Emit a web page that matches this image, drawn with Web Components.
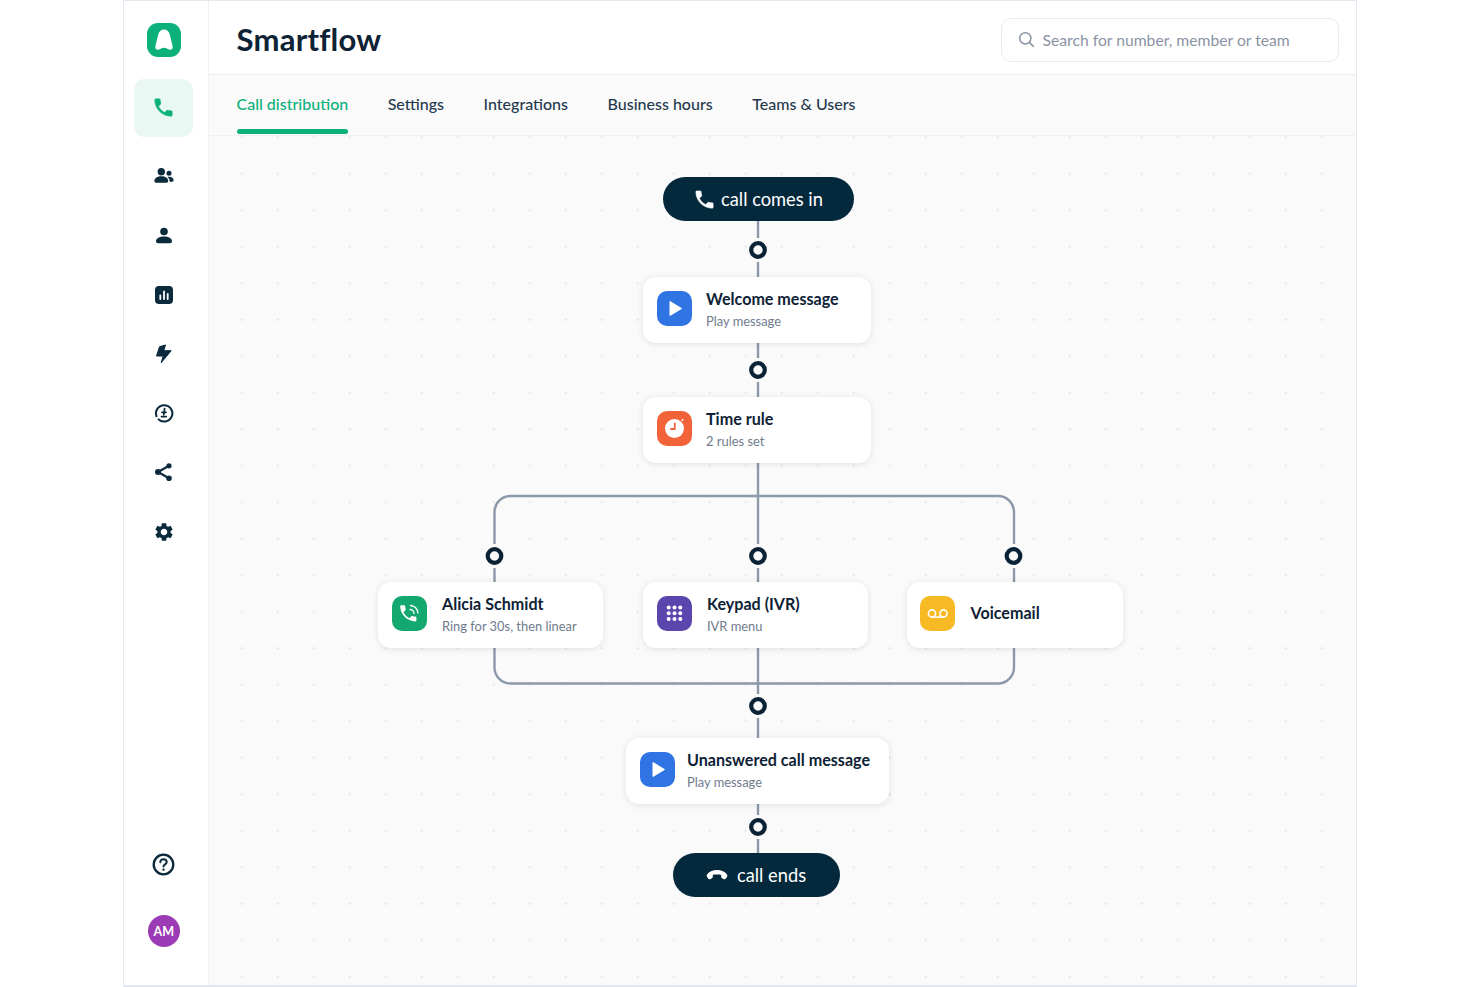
<!DOCTYPE html>
<html>
<head>
<meta charset="utf-8">
<title>Smartflow</title>
<style>
  html, body { margin: 0; height: 100%; background: #fff; }
  body { font-family: "Lato", "Liberation Sans", sans-serif; color: #0e2235; overflow: hidden; }
</style>
</head>
<body>

<template id="app-shell-tpl">
  <style>
    :host {
      display: grid;
      grid-template-columns: 84.5px 1fr;
      box-sizing: border-box;
      width: 1234px;
      height: 987px;
      margin-left: 123px;
      border: 1.5px solid #e4e7ef;
      border-top-width: 1px;
      border-bottom-width: 2px;
      background: #fff;
    }
    .main { display: flex; flex-direction: column; min-width: 0; background: #fafafb; }
  </style>
  <slot name="side"></slot>
  <div class="main">
    <slot name="head"></slot>
    <slot name="tabs"></slot>
    <slot></slot>
  </div>
</template>

<template id="side-nav-tpl">
  <style>
    :host {
      display: flex;
      flex-direction: column;
      align-items: center;
      box-sizing: border-box;
      padding: 22px 4px 38px 0;
      border-right: 1px solid #f0f1f4;
      background: #fff;
      color: #0b2a3c;
    }
    .logo { width: 34px; height: 34px; margin-bottom: 22px; }
    .nav { display: flex; flex-direction: column; align-items: center; }
    .bottom { margin-top: auto; display: flex; flex-direction: column; align-items: center; gap: 39px; }
  </style>
  <div class="logo"><slot name="logo"></slot></div>
  <div class="nav"><slot></slot></div>
  <div class="bottom"><slot name="bottom"></slot></div>
</template>

<template id="nav-item-tpl">
  <style>
    :host {
      display: flex;
      align-items: center;
      justify-content: center;
      width: 59px;
      height: 59.2px;
      border-radius: 10px;
    }
    :host([active]) { height: 57.5px; margin-bottom: 10.3px; background: #e9f8f2; color: #0bb07a; }
  </style>
  <slot></slot>
</template>

<template id="user-avatar-tpl">
  <style>
    :host {
      display: flex;
      align-items: center;
      justify-content: center;
      width: 32px;
      height: 32px;
      border-radius: 50%;
      background: #9b3bb5;
      color: #fff;
      font-size: 12.5px;
      font-weight: 700;
    }
  </style>
  <slot></slot>
</template>

<template id="page-header-tpl">
  <style>
    :host {
      display: flex;
      align-items: center;
      justify-content: space-between;
      box-sizing: border-box;
      height: 74px;
      padding: 4px 17.5px 0 28px;
      border-bottom: 1px solid #eceef2;
      background: #fff;
    }
    h1 { margin: -1px 0 0; font-size: 31px; font-weight: 700; letter-spacing: .25px; color: #0e2235; }
  </style>
  <h1><slot></slot></h1>
  <slot name="search"></slot>
</template>

<template id="search-box-tpl">
  <style>
    :host {
      display: flex;
      align-items: center;
      gap: 8px;
      box-sizing: border-box;
      width: 338px;
      height: 44px;
      padding: 0 16px;
      border: 1.5px solid #e9ebf0;
      border-radius: 10px;
      background: #fff;
      color: #8a93a3;
      font-size: 15.7px;
    }
    svg { display: block; flex: none; }
  </style>
  <svg width="17" height="17" viewBox="0 0 17 17" fill="none" stroke="#8a95a5" stroke-width="1.5" stroke-linecap="round">
    <circle cx="7.3" cy="7.3" r="5.6"/><path d="M11.6 11.6 15.4 15.4"/>
  </svg>
  <span><slot></slot></span>
</template>

<template id="tab-bar-tpl">
  <style>
    :host {
      display: flex;
      gap: 39.5px;
      box-sizing: border-box;
      height: 61px;
      padding-left: 28px;
      border-bottom: 1px solid #f0f1f4;
    }
  </style>
  <slot></slot>
</template>

<template id="tab-item-tpl">
  <style>
    :host {
      display: flex;
      flex-direction: column;
      justify-content: space-between;
      box-sizing: border-box;
      height: 59px;
      padding-top: 18px;
      font-size: 16px;
      font-weight: 500;
      line-height: 22px;
      color: #25394c;
    }
    .bar { height: 5px; border-radius: 3px; }
    :host([active]) { color: #0bb07a; }
    :host([active]) .bar { background: #0bb07a; }
  </style>
  <span><slot></slot></span>
  <div class="bar"></div>
</template>

<template id="flow-canvas-tpl">
  <style>
    :host {
      display: block;
      position: relative;
      flex: 1;
      background-image: radial-gradient(circle, #dcdfe5 .9px, transparent 1.2px);
      background-size: 36px 36.5px;
      background-position: 14.6px -17px;
    }
    svg { position: absolute; left: 0; top: 0; }
  </style>
  <svg width="1147" height="849" viewBox="209 136 1147 849" fill="none">
    <g stroke="#8c99aa" stroke-width="2.4">
      <path d="M758 221V238M758 262V277"/>
      <path d="M758 343V358M758 382V397"/>
      <path d="M758 463V544M758 568V582"/>
      <path d="M494.5 544V512a16 16 0 0 1 16-16H998a16 16 0 0 1 16 16V544"/>
      <path d="M494.5 568V582M1014 568V582"/>
      <path d="M494.5 647V667a16 16 0 0 0 16 16.5H998a16 16 0 0 0 16-16.5V647"/>
      <path d="M758 647V694M758 718V738"/>
      <path d="M758 804V815M758 839V853"/>
    </g>
    <g stroke="#0b2235" stroke-width="4.2" fill="#fafafb">
      <circle cx="758" cy="250" r="6.8"/>
      <circle cx="758" cy="370" r="6.8"/>
      <circle cx="494.5" cy="556" r="6.8"/>
      <circle cx="758" cy="556" r="6.8"/>
      <circle cx="1013.5" cy="556" r="6.8"/>
      <circle cx="758" cy="706" r="6.8"/>
      <circle cx="758" cy="827" r="6.8"/>
    </g>
  </svg>
  <slot></slot>
</template>

<template id="flow-node-tpl">
  <style>
    :host {
      display: flex;
      align-items: center;
      gap: var(--gap, 14px);
      position: absolute;
      box-sizing: border-box;
      height: 65.5px;
      padding: 0 0 2px var(--pad, 14.5px);
      border-radius: 13px;
      background: #fff;
      box-shadow: 0 1px 6px rgba(40, 55, 80, .13);
    }
    .icon { width: 35px; height: 35px; flex: none; }
    .text { display: flex; flex-direction: column; gap: 3px; margin-top: var(--text-top, 2px); }
    .title { font-size: 16.1px; line-height: 20px; font-weight: 700; color: #0e2235; }
    .sub { font-size: 12.9px; line-height: 18px; color: #6f7b8c; }
    .sub:empty { display: none; }
  </style>
  <div class="icon"><slot name="icon"></slot></div>
  <div class="text">
    <div class="title"><slot></slot></div>
    <div class="sub"></div>
  </div>
</template>

<template id="flow-pill-tpl">
  <style>
    :host {
      display: flex;
      align-items: center;
      justify-content: center;
      gap: var(--gap, 5px);
      position: absolute;
      box-sizing: border-box;
      height: 44px;
      border-radius: 22px;
      background: #04293c;
      color: #fff;
      font-size: 18.3px;
    }
  </style>
  <slot name="icon"></slot>
  <span><slot></slot></span>
</template>

<app-shell>
  <side-nav slot="side">
    <svg slot="logo" width="34" height="34" viewBox="0 0 34 34" style="display:block">
      <rect width="34" height="34" rx="11" fill="#0bb07a"/>
      <path d="M17 6.500c3 0 5 2 5.800 5l2.800 11.500c.6 2.600-1.400 4.500-3.600 3.500-1.800-.8-3.300-1.800-5-1.800s-3.200 1-5 1.800c-2.200 1-4.200-.9-3.600-3.500L11.200 11.500c.8-3 2.800-5 5.800-5z" fill="#fff"/>
    </svg>
    <nav-item active>
      <svg width="23" height="23" viewBox="0 0 24 24" fill="currentColor" stroke="currentColor" stroke-width=".8" stroke-linejoin="round"><path d="M6.620 10.790c1.440 2.830 3.760 5.140 6.590 6.590l2.200-2.200c.27-.27.67-.36 1.020-.24 1.120.37 2.330.57 3.570.57.55 0 1 .45 1 1V20c0 .55-.45 1-1 1-9.390 0-17-7.610-17-17 0-.55.45-1 1-1h3.500c.55 0 1 .45 1 1 0 1.250.2 2.450.57 3.570.11.35.03.74-.25 1.020l-2.200 2.200z"/></svg>
    </nav-item>
    <nav-item>
      <svg width="20" height="18" viewBox="0 0 20 18" fill="currentColor"><circle cx="7.300" cy="4.800" r="3.700"/><path d="M.4 14c0-3 3-4.800 6.900-4.800s6.900 1.800 6.900 4.800c0 1-.6 1.700-1.600 1.700H2c-1 0-1.600-.7-1.600-1.700z"/><circle cx="15" cy="6.300" r="2.500"/><path d="M15 9.800c2.600 0 4.600 1.300 4.600 3.300 0 1-.6 1.600-1.500 1.600h-2.500c.2-2-.5-3.500-2.100-4.600.5-.2 1-.3 1.500-.3z"/></svg>
    </nav-item>
    <nav-item>
      <svg width="18" height="18" viewBox="0 0 18 18" fill="currentColor"><circle cx="9" cy="4.500" r="3.800"/><path d="M1 14.300c0-3 3.500-4.800 8-4.800s8 1.800 8 4.800c0 1.200-.8 2-2 2H3c-1.200 0-2-.8-2-2z"/></svg>
    </nav-item>
    <nav-item>
      <svg width="18" height="18" viewBox="0 0 18 18"><rect width="18" height="18" rx="4" fill="currentColor"/><path d="M5.300 9.500V13M9 5.500V13M12.700 8V13" stroke="#fff" stroke-width="1.800" stroke-linecap="round"/></svg>
    </nav-item>
    <nav-item>
      <svg width="16" height="20" viewBox="-.5 -1 16 20" fill="currentColor" stroke="currentColor" stroke-width="1" stroke-linejoin="round"><path d="M3 1.700 9 0 7.300 5.700H14.700L4.700 17.700 6.700 11H0z"/></svg>
    </nav-item>
    <nav-item>
      <svg width="20" height="20" viewBox="0 0 20 20" fill="none" stroke="currentColor"><path d="M4 15.800A8.200 8.200 0 1 0 2.800 14" stroke-width="2"/><path d="M10.600 5.600 9.800 11.500M7.500 13.600h4.700M8 9.300h4" stroke-width="1.800" stroke-linecap="round"/></svg>
    </nav-item>
    <nav-item>
      <svg width="19" height="20" viewBox="0 0 19 20" fill="currentColor" stroke="currentColor"><path d="M15 3.800 4 10l11 6.200" fill="none" stroke-width="2.200"/><circle cx="15" cy="3.800" r="2.600" stroke="none"/><circle cx="4" cy="10" r="3" stroke="none"/><circle cx="15" cy="16.200" r="2.800" stroke="none"/></svg>
    </nav-item>
    <nav-item>
      <svg width="22" height="22" viewBox="0 0 24 24" fill="currentColor"><path d="M19.140 12.940c.04-.3.060-.61.060-.94 0-.32-.02-.64-.07-.94l2.030-1.580c.18-.14.23-.41.120-.61l-1.920-3.320c-.12-.22-.37-.29-.59-.22l-2.390.96c-.5-.38-1.030-.7-1.620-.94l-.36-2.540c-.04-.24-.24-.41-.48-.41h-3.840c-.24 0-.43.170-.47.410l-.36 2.540c-.59.24-1.130.57-1.620.94l-2.390-.96c-.22-.08-.47 0-.59.22L2.740 8.870c-.12.210-.08.470.12.610l2.030 1.580c-.05.3-.09.630-.09.940s.02.640.07.940l-2.030 1.580c-.18.140-.23.410-.12.610l1.920 3.320c.12.220.37.290.59.220l2.390-.96c.5.380 1.030.7 1.620.94l.36 2.540c.05.240.24.410.48.410h3.840c.24 0 .44-.17.470-.41l.36-2.540c.59-.24 1.130-.56 1.620-.94l2.390.96c.22.080.47 0 .59-.22l1.920-3.320c.12-.22.070-.47-.12-.61l-2.010-1.580zM12 15.600c-1.980 0-3.600-1.620-3.600-3.600s1.620-3.600 3.600-3.600 3.600 1.620 3.600 3.600-1.620 3.600-3.600 3.600z"/></svg>
    </nav-item>
    <svg slot="bottom" width="23" height="23" viewBox="0 0 23 23" fill="none" stroke="#0b2a3c" style="display:block"><circle cx="11.500" cy="11.500" r="9.800" stroke-width="2.300"/><path d="M8.300 9.200c0-1.900 1.400-3 3.200-3s3.200 1.100 3.200 2.800c0 2.400-3.200 2.400-3.200 4.600" stroke-width="2" stroke-linecap="round"/><circle cx="11.500" cy="16.600" r="1.200" fill="#0b2a3c" stroke="none"/></svg>
    <user-avatar slot="bottom">AM</user-avatar>
  </side-nav>

  <page-header slot="head">
    Smartflow
    <search-box slot="search">Search for number, member or team</search-box>
  </page-header>

  <tab-bar slot="tabs">
    <tab-item active>Call distribution</tab-item>
    <tab-item>Settings</tab-item>
    <tab-item>Integrations</tab-item>
    <tab-item>Business hours</tab-item>
    <tab-item>Teams &amp; Users</tab-item>
  </tab-bar>

  <flow-canvas>
    <flow-pill x="454" y="41" w="191">
      <svg slot="icon" width="23" height="23" viewBox="0 0 24 24" fill="#fff" stroke="#fff" stroke-width=".6" stroke-linejoin="round"><path d="M6.620 10.790c1.440 2.830 3.760 5.140 6.590 6.590l2.200-2.200c.27-.27.67-.36 1.020-.24 1.120.37 2.330.57 3.570.57.55 0 1 .45 1 1V20c0 .55-.45 1-1 1-9.390 0-17-7.610-17-17 0-.55.45-1 1-1h3.500c.55 0 1 .45 1 1 0 1.250.2 2.450.57 3.570.11.35.03.74-.25 1.020l-2.200 2.200z"/></svg>
      call comes in
    </flow-pill>

    <flow-node x="434" y="141" w="228" sub="Play message">
      <svg slot="icon" width="35" height="35" viewBox="0 0 35 35"><rect width="35" height="35" rx="10" fill="#2f74e2"/><path d="M13 10.500v14l11.500-7z" fill="#fff" stroke="#fff" stroke-linejoin="round"/></svg>
      Welcome message
    </flow-node>

    <flow-node x="434" y="261" w="228" sub="2 rules set">
      <svg slot="icon" width="35" height="35" viewBox="0 0 35 35"><rect width="35" height="35" rx="10" fill="#f2633a"/><circle cx="17.500" cy="17.500" r="9.500" fill="#fff"/><circle cx="25.500" cy="9" r="1" fill="#fff"/><path d="M17.800 12.500V18H14" fill="none" stroke="#f2633a" stroke-width="1.800" stroke-linecap="round" stroke-linejoin="round"/></svg>
      Time rule
    </flow-node>

    <flow-node x="169" y="446" w="225" sub="Ring for 30s, then linear" style="--gap:15px">
      <svg slot="icon" width="35" height="35" viewBox="0 0 35 35"><rect width="35" height="35" rx="10" fill="#12a86f"/><path transform="translate(5.500 6.500) scale(.9)" d="M6.620 10.790c1.440 2.830 3.760 5.140 6.590 6.590l2.200-2.200c.27-.27.67-.36 1.020-.24 1.120.37 2.330.57 3.570.57.55 0 1 .45 1 1V20c0 .55-.45 1-1 1-9.390 0-17-7.610-17-17 0-.55.45-1 1-1h3.500c.55 0 1 .45 1 1 0 1.250.2 2.450.57 3.570.11.35.03.74-.25 1.020l-2.200 2.200z" fill="#fff"/><path d="M18 13.500a4 4 0 0 1 4 4M18.500 9.500a8 8 0 0 1 7.500 7.500" fill="none" stroke="#fff" stroke-width="1.300" stroke-linecap="round"/></svg>
      Alicia Schmidt
    </flow-node>

    <flow-node x="434" y="446" w="225" sub="IVR menu" style="--gap:15px">
      <svg slot="icon" width="35" height="35" viewBox="0 0 35 35"><rect width="35" height="35" rx="10" fill="#5b46ad"/><g fill="#fff"><circle cx="11.700" cy="11.500" r="2"/><circle cx="17.500" cy="11.500" r="2"/><circle cx="23.300" cy="11.500" r="2"/><circle cx="11.700" cy="17.300" r="2"/><circle cx="17.500" cy="17.300" r="2"/><circle cx="23.300" cy="17.300" r="2"/><circle cx="11.700" cy="23.100" r="2"/><circle cx="17.500" cy="23.100" r="2"/><circle cx="23.300" cy="23.100" r="2"/></g></svg>
      Keypad (IVR)
    </flow-node>

    <flow-node x="698" y="446" w="216" style="--pad:13.5px;--gap:15.5px;--text-top:-2px">
      <svg slot="icon" width="35" height="35" viewBox="0 0 35 35"><rect width="35" height="35" rx="10" fill="#f7ba24"/><g fill="none" stroke="#fff" stroke-width="1.600"><circle cx="12" cy="17.500" r="3.600"/><circle cx="23.500" cy="17.500" r="3.600"/><path d="M12 21.100h11.500"/></g></svg>
      Voicemail
    </flow-node>

    <flow-node x="417" y="602" w="263" sub="Play message" style="--pad:14px;--gap:12.5px">
      <svg slot="icon" width="35" height="35" viewBox="0 0 35 35"><rect width="35" height="35" rx="10" fill="#2f74e2"/><path d="M13 10.500v14l11.500-7z" fill="#fff" stroke="#fff" stroke-linejoin="round"/></svg>
      Unanswered call message
    </flow-node>

    <flow-pill x="464" y="717" w="167" style="--gap:9px">
      <svg slot="icon" width="22" height="12" viewBox="0 0 22 12" fill="#fff"><path d="M11 1C6.500 1 3 3 1.200 5.200.4 6.200.5 7.300 1.200 8.200l1.200 1.500c.6.700 1.500.8 2.300.3l1.500-1c.6-.4.8-1 .7-1.700l-.2-1.300C8.300 5.400 13.700 5.400 15.300 6l-.2 1.300c-.1.700.1 1.300.7 1.700l1.500 1c.8.500 1.700.4 2.300-.3l1.200-1.500c.7-.9.8-2 0-3C19 3 15.500 1 11 1z"/></svg>
      call ends
    </flow-pill>
  </flow-canvas>
</app-shell>

<script>
  (() => {
    // every element just clones its template into an open shadow root
    function define(name, setup) {
      const template = document.getElementById(name + '-tpl');
      customElements.define(name, class extends HTMLElement {
        constructor() {
          super();
          this.attachShadow({mode: 'open'}).appendChild(template.content.cloneNode(true));
        }
        connectedCallback() {
          if (setup) setup(this);
        }
      });
    }

    /* nodes sit on a free canvas, their place comes from attributes */
    function place(el) {
      el.style.left = el.getAttribute('x') + 'px';
      el.style.top = el.getAttribute('y') + 'px';
      el.style.width = el.getAttribute('w') + 'px';
    }

    define('app-shell');
    define('side-nav');
    define('nav-item');
    define('user-avatar');
    define('page-header');
    define('search-box');
    define('tab-bar');
    define('tab-item');
    define('flow-canvas');
    define('flow-pill', place);
    define('flow-node', el => {
      place(el);
      el.shadowRoot.querySelector('.sub').textContent = el.getAttribute('sub') || '';
    });
  })();
</script>
</body>
</html>
